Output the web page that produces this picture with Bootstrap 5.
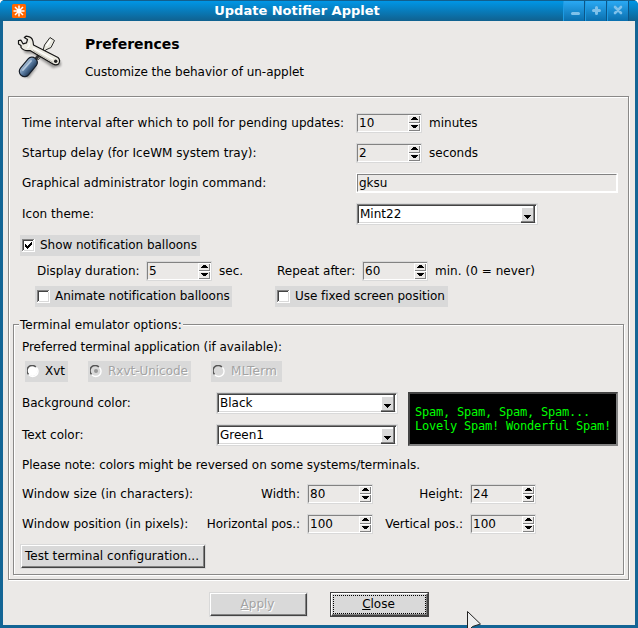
<!DOCTYPE html>
<html lang="en">
<head>
<meta charset="utf-8">
<meta name="viewport" content="width=device-width, initial-scale=1">
<title>Update Notifier Applet</title>
<link href="https://cdn.jsdelivr.net/npm/bootstrap@5.3.0/dist/css/bootstrap.min.css" rel="stylesheet">
<style>
body{font:12px/20px "DejaVu Sans",sans-serif;color:#000;background:#fff;overflow:hidden;white-space:nowrap}
.app-window{width:638px;height:628px;background:#136595;border-radius:5px 5px 0 0;padding:0 3px 3px;overflow:hidden}
.titlebar{height:21px;margin:0 -3px;padding:0 5px 0 12px;border-top:1px solid #125f8d;background:linear-gradient(#0096e6,#10618f)}
.titlebar .logo{width:14px;height:14px;margin-top:3px}
.caption{font-weight:700;font-size:13px;line-height:20px;color:#fff;margin-left:5px}
.wm{width:22px;height:20px;background:linear-gradient(#2aa9f4,#0a6fae);border-right:1px solid #0c5688;border-left:1px solid #1c9be4}
.wm svg{display:block}
.client{height:604px;background:#ebe9e7}
.head{height:75px;padding:10px 0 0 13px}
.head h1{font-size:14px;font-weight:700;line-height:20px;margin:3px 0 8px}
.head-text{margin-left:19px;letter-spacing:-.02px}
.etched{border:1px solid #8a8988;box-shadow:1px 1px 0 #fff,inset 1px 1px 0 #fff}
.panel{margin:0 6px 0 5px;width:621px;height:484px;padding:16px 4px 0 4px}
.line{display:flex;align-items:flex-start;height:20px;margin-bottom:10px;padding-left:9px}
.lbl{flex:none}
.w-main{width:334px;letter-spacing:.03px}.w-color{width:194px}
.wider{letter-spacing:.04px}.tighter{letter-spacing:-.04px}
.spin{flex:none;width:66px;height:20px;border:1px solid #d9d9d9;display:flex;line-height:18px}
.spin>div{flex:1;display:flex;justify-content:space-between;border:1px solid;border-color:#828282 #fff #fff #828282;border-right:0;padding-left:1px;line-height:16px}
.spin svg{display:block;flex:none}
.spin-unit{margin-left:7px}
.entry{width:262px;height:20px;border:1px solid #fff;border-top-color:#fafafa}
.entry>div{height:18px;border:1px solid;border-color:#828282 #fff #fff #828282;padding-left:1px;line-height:16px}
.combo{flex:none;width:182px;height:22px;border:1px solid #d9d9d9}
.combo>div{height:20px;border:1px solid;border-color:#828282 #fff #fff #828282}
.combo>div>div{height:18px;display:flex;justify-content:space-between;background:#fff;border:solid #434343;border-width:1px 0 0 1px;box-shadow:inset 0 -1px #d9d9d9;padding-left:1px;line-height:16px}
.combo svg{display:block}
.tick{height:21px;background:#d9d9d9;padding:0 0 0 2px;display:flex;flex:none;line-height:20px;letter-spacing:-.03px}
.tick svg{flex:none;margin:4px 5px 0 0}
.off{color:#a3a3a3;text-shadow:1px 1px #fff}
.group{width:611px;height:251px;position:relative;margin-top:17px;padding:12px 0 0 8px}
.legend-text{position:absolute;left:5px;top:-10px;background:#ebe9e7;padding:0 1px;height:20px;letter-spacing:.03px}
.group .line{padding-left:0}
.preview{width:210px;height:54px;background:#000;border:2px solid;border-color:#434343 #828282 #828282 #434343;color:#0f0;font:12px/14px "DejaVu Sans Mono",monospace;letter-spacing:-.224px;padding:11px 0 0 5px}
.push{height:25px;border:1px solid #d9d9d9;padding:0;background:#d9d9d9;color:#000;font:12px/20px "DejaVu Sans",sans-serif;display:block}
.push>span{display:block;height:23px;border:1px solid;border-color:#fff #434343 #434343 #fff;box-shadow:inset -1px -1px #828282;padding-right:2px}
.push.off{color:#a3a3a3}
.push.default{border-color:#434343}
.push.default>span{position:relative}
.push.default>span::after{content:"";position:absolute;left:1px;right:1px;top:1px;bottom:1px;border:1px dotted #000}
.pointer{position:absolute;left:466px;top:611px}
</style>
</head>
<body>
<svg width="0" height="0" class="d-none">
<symbol id="sp" viewBox="0 0 13 16"><path fill="#fff" d="M0 0h13v16H0z"/><path fill="#828282" d="M1 1h11v7H1zM1 9h11v7H1z"/><path fill="#ebe9e7" d="M1 1h10v6H1zM1 9h10v6H1z"/><path d="M5 2h3v1h1v1h1v1H3V4h1V3h1zM3 10h7v1H9v1H8v1H5v-1H4v-1H3z"/></symbol>
<symbol id="dd" viewBox="0 0 15 17"><path fill="#434343" d="M0 0h14v17H0z"/><path fill="#828282" d="M0 0h13v16H0z"/><path fill="#fff" d="M0 0h12v15H0z"/><path fill="#d9d9d9" d="M1 2h11v13H1z"/><path d="M3 9h7v1H9v1H8v1H7v1H6v-1H5v-1H4v-1H3z"/></symbol>
<symbol id="cb" viewBox="0 0 13 13"><path fill="#fff" d="M0 0h13v13H0z"/><path fill="#828282" d="M0 0h12v1H1v11H0z"/><path fill="#434343" d="M1 1h10v1H2v9H1z"/><path fill="#d9d9d9" d="M11 2v9H2v1h10V2z"/></symbol>
<symbol id="rd" viewBox="0 0 13 13"><circle cx="5.500" cy="6" r="5" fill="currentColor"/><path fill="none" stroke="#fff" stroke-width="1.4" d="M9.500 2.500A5.300 5.300 0 0 1 2 10"/><path fill="none" stroke="#555" stroke-width="1.5" d="M1.500 9.300A5 5 0 0 1 8.800 2"/></symbol>
</svg>
<div class="app-window">
 <div class="titlebar d-flex">
  <svg class="logo" viewBox="0 0 14 14"><rect width="14" height="14" rx="1.5" fill="#f60"/><path stroke="#fff" stroke-width="1.5" d="M7 1.5v11M1.5 7h11M3 3l8 8M11 3l-8 8"/></svg>
  <div class="caption flex-grow-1 text-center">Update Notifier Applet</div>
  <div class="wm"><svg width="20" height="20"><path stroke="#7fc1ea" stroke-width="3" stroke-linecap="round" d="M8.500 12.500h6"/></svg></div>
  <div class="wm"><svg width="20" height="20"><path stroke="#7fc1ea" stroke-width="3" stroke-linecap="round" d="M7.500 9.500h6M10.500 6.500v6"/></svg></div>
  <div class="wm me-1"><svg width="20" height="20"><path stroke="#7fc1ea" stroke-width="2.600" stroke-linecap="round" d="M7 6l6 6M13 6l-6 6"/></svg></div>
 </div>
 <div class="client">
  <div class="head d-flex">
   <svg width="50" height="50" viewBox="0 0 50 50">
    <defs>
     <linearGradient id="grip" x1="0" x2="0" y1="0" y2="1"><stop offset="0" stop-color="#a9c0d8"/><stop offset=".45" stop-color="#5d7fa5"/><stop offset="1" stop-color="#223c5a"/></linearGradient>
     <filter id="soft"><feGaussianBlur stdDeviation="1.3"/></filter>
    </defs>
    <g filter="url(#soft)" opacity=".35"><path d="M4 13l5 9 8 1 20 14 8-2V31L19 17zM5 45l8 2 9-12z"/></g>
    <path d="M20 27.500L27 19.500 28.500 14 34 6.500 38.500 9.500 35 16.500 29.500 19 22.500 28.500z" fill="#e9e8df" stroke="#2a2a28"/>
    <path d="M30.500 15L34.500 9" stroke="#fff" stroke-width="1.500"/>
    <path d="M19 29l4-5" stroke="#333" stroke-width="3"/>
    <rect x="1.300" y="30.700" width="22" height="10.500" rx="5" transform="rotate(-50 12.300 35.900)" fill="url(#grip)" stroke="#151d28" stroke-width="1.200"/>
    <path d="M7 39l8-9" stroke="#c4d5e5" stroke-width="1.800" stroke-linecap="round" opacity=".8"/>
    <path d="M2.500 9.500L5 9.200 7 12.800 10.500 11.800 11.500 8.500 8.300 6.500 10 5.200Q16 5.500 17 10.500L17.500 14 42 26.500Q45 29.500 42.500 33 40 34.800 37 33L14 19.500Q8 20.500 5 16.500L5 14.500 2.500 13z" fill="#eceae1" stroke="#151515" stroke-width="1.200" stroke-linejoin="round"/>
    <path d="M13 12q1 4-2 5M17 17l20 11" fill="none" stroke="#fff" stroke-width="1.300"/>
    <path d="M17 19.500l20 12" stroke="#b9b7ad"/>
    <circle cx="39.700" cy="30.300" r="1.700" fill="#222"/>
   </svg>
   <div class="head-text"><h1>Preferences</h1>Customize the behavior of un-applet</div>
  </div>
  <div class="panel etched">
   <div class="line"><div class="lbl w-main">Time interval after which to poll for pending updates:</div><div class="spin"><div>10<svg width="13" height="16"><use href="#sp"/></svg></div></div><div class="spin-unit">minutes</div></div>
   <div class="line"><div class="lbl w-main">Startup delay (for IceWM system tray):</div><div class="spin"><div>2<svg width="13" height="16"><use href="#sp"/></svg></div></div><div class="spin-unit">seconds</div></div>
   <div class="line"><div class="lbl w-main">Graphical administrator login command:</div><div class="entry"><div>gksu</div></div></div>
   <div class="line" style="height:22px;line-height:22px"><div class="lbl w-main">Icon theme:</div><div class="combo"><div><div>Mint22<svg width="15" height="17"><use href="#dd"/></svg></div></div></div></div>
   <div class="line ps-2 mb-0"><label class="tick" style="margin-left:-1px;width:180px"><svg width="13" height="13"><use href="#cb"/><path d="M3 5h1v1h1v1h1V6h1V5h1V4h1V3h1v3H9v1H8v1H7v1H6v1H5V9H4V8H3z"/></svg>Show notification balloons</label></div>
   <div class="line" style="margin-top:6px;margin-bottom:5px;padding-left:24px"><div class="lbl" style="width:109px">Display duration:</div><div class="spin"><div>5<svg width="13" height="16"><use href="#sp"/></svg></div></div><div class="lbl" style="width:65px;padding-left:7px">sec.</div><div class="lbl" style="width:85px">Repeat after:</div><div class="spin"><div>60<svg width="13" height="16"><use href="#sp"/></svg></div></div><div class="lbl wider" style="padding-left:7px">min. (0 = never)</div></div>
   <div class="line mb-0" style="height:21px;padding-left:22px"><div class="lbl" style="width:240px"><label class="tick" style="width:197px"><svg width="13" height="13"><use href="#cb"/></svg>Animate notification balloons</label></div><label class="tick" style="width:173px"><svg width="13" height="13"><use href="#cb"/></svg>Use fixed screen position</label></div>
   <div class="group etched">
    <div class="legend-text">Terminal emulator options:</div>
    <div class="line tighter" style="margin-bottom:4px">Preferred terminal application (if available):</div>
    <div class="line" style="height:21px;padding-left:3px"><label class="tick" style="width:43px"><svg width="13" height="13" color="#fff"><use href="#rd"/></svg>Xvt</label><label class="tick off wider" style="width:103px;margin-left:20px"><svg width="13" height="13" color="#d9d9d9"><use href="#rd"/><circle cx="6" cy="6" r="2" fill="#999"/></svg>Rxvt-Unicode</label><label class="tick off" style="width:71px;margin-left:20px;letter-spacing:.3px"><svg width="13" height="13" color="#d9d9d9"><use href="#rd"/></svg>MLTerm</label></div>
    <div class="d-flex">
     <div>
      <div class="line" style="height:22px;line-height:22px"><div class="lbl w-color">Background color:</div><div class="combo"><div><div>Black<svg width="15" height="17"><use href="#dd"/></svg></div></div></div></div>
      <div class="line" style="height:22px;line-height:22px"><div class="lbl w-color">Text color:</div><div class="combo"><div><div>Green1<svg width="15" height="17"><use href="#dd"/></svg></div></div></div></div>
     </div>
     <div class="preview" style="margin-left:10px">Spam, Spam, Spam, Spam...<br>Lovely Spam! Wonderful Spam!</div>
    </div>
    <div class="line tighter" style="margin-top:-1px">Please note: colors might be reversed on some systems/terminals.</div>
    <div class="line" style="margin-top:-1px"><div class="lbl wider" style="width:172px">Window size (in characters):</div><div class="lbl text-end" style="width:106px;margin-right:7px">Width:</div><div class="spin"><div>80<svg width="13" height="16"><use href="#sp"/></svg></div></div><div class="lbl text-end" style="width:90px;margin-right:7px">Height:</div><div class="spin"><div>24<svg width="13" height="16"><use href="#sp"/></svg></div></div></div>
    <div class="line"><div class="lbl wider" style="width:172px">Window position (in pixels):</div><div class="lbl text-end" style="width:106px;margin-right:7px;letter-spacing:-.06px">Horizontal pos.:</div><div class="spin"><div>100<svg width="13" height="16"><use href="#sp"/></svg></div></div><div class="lbl text-end" style="width:90px;margin-right:7px">Vertical pos.:</div><div class="spin"><div>100<svg width="13" height="16"><use href="#sp"/></svg></div></div></div>
    <button class="push" style="width:186px;margin-left:-2px;letter-spacing:.06px"><span>Test terminal configuration...</span></button>
   </div>
  </div>
  <div class="d-flex" style="padding:12px 0 0 206px"><button class="push off" style="width:99px"><span><u>A</u>pply</span></button><button class="push default" style="width:99px;margin-left:22px"><span><u>C</u>lose</span></button></div>
 </div>
</div>
<svg class="pointer" width="16" height="17"><path d="M1.500.5v20l5-5 8-2.500z" fill="#eee" stroke="#222"/></svg>
<script src="https://cdn.jsdelivr.net/npm/bootstrap@5.3.0/dist/js/bootstrap.bundle.min.js"></script>
</body>
</html>
